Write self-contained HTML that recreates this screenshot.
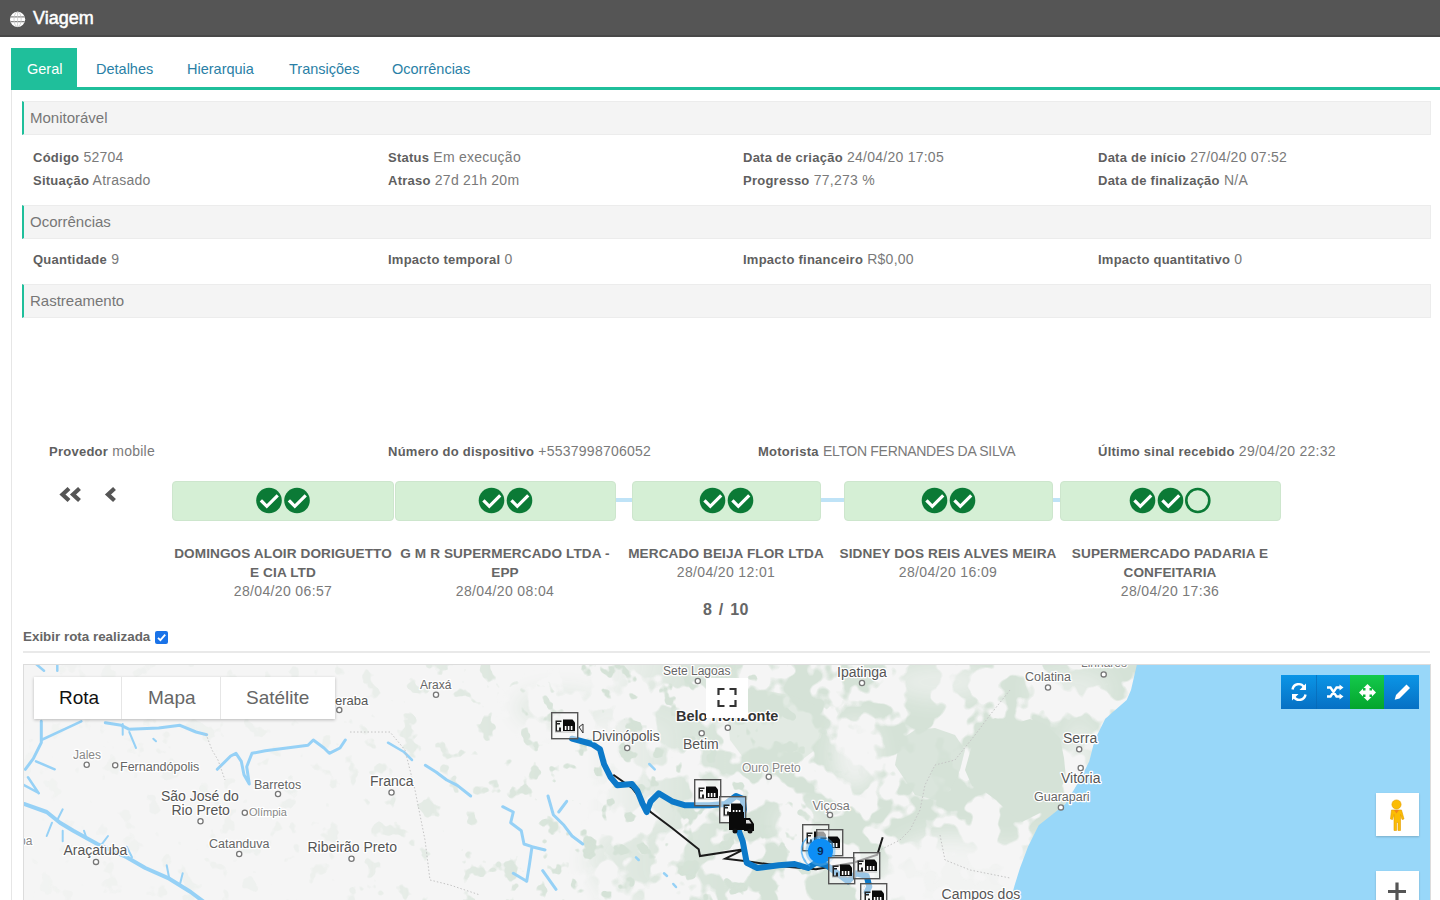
<!DOCTYPE html>
<html><head><meta charset="utf-8">
<style>
*{box-sizing:border-box;margin:0;padding:0}
html,body{width:1440px;height:900px;overflow:hidden;background:#fff;font-family:"Liberation Sans",sans-serif;position:relative}
.a{position:absolute;white-space:nowrap}
.hdr{left:0;top:0;width:1440px;height:37px;background:#555;border-bottom:2px solid #484848}
.ttl{left:33px;top:7px;font-size:18px;color:#fff;line-height:22px;-webkit-text-stroke:0.5px #fff}
.tab{top:48px;height:40px;line-height:42px;font-size:14.5px;color:#2a7fa6}
.tabline{left:11px;top:87px;width:1429px;height:2.5px;background:#1fbf9b}
.vline{left:11px;top:90px;width:1px;height:810px;background:#e6e6e6}
.sec{left:22px;width:1409px;height:34px;background:#f4f4f4;border:1px solid #ececec;border-left:2px solid #1fbf9b;font-size:15px;color:#777;line-height:32px;padding-left:6px}
.f{font-size:14px;color:#7a7a7a;line-height:16px;letter-spacing:0.25px}
.f b{color:#5f5f5f;font-size:13px}
.box{top:481px;height:40px;background:#d5efd5;border-radius:4px;border:1px solid #cde6cd}
.name{font-size:13.6px;font-weight:bold;color:#666;text-align:center;line-height:19px;white-space:normal;letter-spacing:0.1px}
.dt{font-size:14px;color:#7a7a7a;text-align:center;line-height:19px;letter-spacing:0.35px}
</style></head><body>
<div class="a hdr"></div>
<svg class="a" style="left:9px;top:11px" width="17" height="17" viewBox="0 0 17 17"><circle cx="8.6" cy="8.3" r="7.6" fill="#fff"/><g stroke="#888" stroke-width="1.3" fill="none"><path d="M1.5 5.9h14.2M1.5 10.7h14.2"/></g><g stroke="#c8c8c8" stroke-width="0.8" fill="none"><path d="M8.6 1v14.6"/><ellipse cx="8.6" cy="8.3" rx="3.6" ry="7.4"/></g></svg>
<div class="a ttl">Viagem</div>

<div class="a" style="left:11px;top:48px;width:66px;height:40px;background:#1fbf9b"></div>
<div class="a tab" style="left:27px;color:#fff">Geral</div>
<div class="a tab" style="left:96px">Detalhes</div>
<div class="a tab" style="left:187px">Hierarquia</div>
<div class="a tab" style="left:289px">Transições</div>
<div class="a tab" style="left:392px">Ocorrências</div>
<div class="a tabline"></div>
<div class="a vline"></div>

<div class="a sec" style="top:101px">Monitorável</div>
<div class="a f" style="left:33px;top:149px"><b>Código</b> 52704</div>
<div class="a f" style="left:33px;top:172px"><b>Situação</b> Atrasado</div>
<div class="a f" style="left:388px;top:149px"><b>Status</b> Em execução</div>
<div class="a f" style="left:388px;top:172px"><b>Atraso</b> 27d 21h 20m</div>
<div class="a f" style="left:743px;top:149px"><b>Data de criação</b> 24/04/20 17:05</div>
<div class="a f" style="left:743px;top:172px"><b>Progresso</b> 77,273 %</div>
<div class="a f" style="left:1098px;top:149px"><b>Data de início</b> 27/04/20 07:52</div>
<div class="a f" style="left:1098px;top:172px"><b>Data de finalização</b> N/A</div>

<div class="a sec" style="top:205px">Ocorrências</div>
<div class="a f" style="left:33px;top:251px"><b>Quantidade</b> 9</div>
<div class="a f" style="left:388px;top:251px"><b>Impacto temporal</b> 0</div>
<div class="a f" style="left:743px;top:251px"><b>Impacto financeiro</b> R$0,00</div>
<div class="a f" style="left:1098px;top:251px"><b>Impacto quantitativo</b> 0</div>

<div class="a sec" style="top:284px">Rastreamento</div>

<div class="a f" style="left:49px;top:443px"><b>Provedor</b> mobile</div>
<div class="a f" style="left:388px;top:443px"><b>Número do dispositivo</b> +5537998706052</div>
<div class="a f" style="left:758px;top:443px"><b>Motorista</b> <span style="letter-spacing:-0.3px">ELTON FERNANDES DA SILVA</span></div>
<div class="a f" style="left:1098px;top:443px"><b>Último sinal recebido</b> 29/04/20 22:32</div>


<svg class="a" style="left:58px;top:484px" width="62" height="22" viewBox="58 484 62 22">
<g fill="none" stroke="#555" stroke-width="4.2" stroke-linecap="butt" stroke-linejoin="miter">
<path d="M69 488.5L62.5 494.5L69 500.5M79.5 488.5L73 494.5L79.5 500.5"/>
<path d="M114.5 488.5L108 494.5L114.5 500.5"/>
</g></svg>
<div class="a" style="left:616px;top:498px;width:17px;height:4px;background:#bfe3f7"></div>
<div class="a" style="left:820px;top:498px;width:25px;height:4px;background:#bfe3f7"></div>
<div class="a" style="left:1052px;top:498px;width:9px;height:4px;background:#bfe3f7"></div>
<div class="a box" style="left:172px;width:222px"></div>
<div class="a box" style="left:395px;width:221px"></div>
<div class="a box" style="left:632px;width:189px"></div>
<div class="a box" style="left:844px;width:209px"></div>
<div class="a box" style="left:1060px;width:221px"></div>
<svg class="a" style="left:0;top:470px" width="1440" height="60" viewBox="0 470 1440 60">
<defs>
<g id="ck"><circle r="12.8" fill="#0b7a36"/><path d="M-7 1L-2.2 5.8L7.6 -4" fill="none" stroke="#fff" stroke-width="3.2" stroke-linecap="square"/></g>
</defs>
<use href="#ck" x="269" y="500.5"/><use href="#ck" x="297" y="500.5"/>
<use href="#ck" x="491.5" y="500.5"/><use href="#ck" x="519.5" y="500.5"/>
<use href="#ck" x="712.5" y="500.5"/><use href="#ck" x="740.5" y="500.5"/>
<use href="#ck" x="934.5" y="500.5"/><use href="#ck" x="962.5" y="500.5"/>
<use href="#ck" x="1142.5" y="500.5"/><use href="#ck" x="1170.5" y="500.5"/>
<circle cx="1197.8" cy="500.5" r="11.5" fill="none" stroke="#0b7a36" stroke-width="2.6"/>
</svg>
<div class="a name" style="left:163px;top:544px;width:240px">DOMINGOS ALOIR DORIGUETTO<br>E CIA LTD</div>
<div class="a dt" style="left:163px;top:582px;width:240px">28/04/20 06:57</div>
<div class="a name" style="left:385px;top:544px;width:240px">G M R SUPERMERCADO LTDA -<br>EPP</div>
<div class="a dt" style="left:385px;top:582px;width:240px">28/04/20 08:04</div>
<div class="a name" style="left:606px;top:544px;width:240px">MERCADO BEIJA FLOR LTDA</div>
<div class="a dt" style="left:606px;top:563px;width:240px">28/04/20 12:01</div>
<div class="a name" style="left:828px;top:544px;width:240px">SIDNEY DOS REIS ALVES MEIRA</div>
<div class="a dt" style="left:828px;top:563px;width:240px">28/04/20 16:09</div>
<div class="a name" style="left:1050px;top:544px;width:240px">SUPERMERCADO PADARIA E<br>CONFEITARIA</div>
<div class="a dt" style="left:1050px;top:582px;width:240px">28/04/20 17:36</div>
<div class="a" style="left:606px;top:600px;width:240px;text-align:center;font-size:16px;font-weight:bold;color:#666;line-height:20px;word-spacing:1.5px;letter-spacing:0.5px">8 / 10</div>
<div class="a" style="left:23px;top:629px;font-size:13.4px;font-weight:bold;color:#666;line-height:16px">Exibir rota realizada</div>
<div class="a" style="left:155px;top:631px;width:13px;height:13px;background:#1a73e8;border-radius:2px"></div>
<svg class="a" style="left:155px;top:631px" width="13" height="13" viewBox="0 0 13 13"><path d="M3 6.8L5.4 9.2L10.2 3.6" fill="none" stroke="#fff" stroke-width="1.8"/></svg>
<div class="a" style="left:23px;top:651px;width:1407px;height:2px;background:#e9e9e9"></div>


<div class="a" style="left:23px;top:664px;width:1408px;height:236px;border:1px solid #dcdcdc;border-bottom:none;overflow:hidden;background:#f5f5f5">
<svg width="1406" height="236" viewBox="24 665 1406 236" style="display:block">
<defs>
<filter id="turb" x="0" y="0" width="100%" height="100%" color-interpolation-filters="sRGB">
<feTurbulence type="fractalNoise" baseFrequency="0.032" numOctaves="3" seed="7" result="n"/>
<feColorMatrix in="n" type="matrix" values="0 0 0 0 0.835  0 0 0 0 0.886  0 0 0 0 0.843  0 0 0 -14 7.4"/>
</filter>
<filter id="turb2" x="0" y="0" width="100%" height="100%" color-interpolation-filters="sRGB">
<feTurbulence type="fractalNoise" baseFrequency="0.05" numOctaves="3" seed="21" result="n"/>
<feColorMatrix in="n" type="matrix" values="0 0 0 0 0.835  0 0 0 0 0.886  0 0 0 0 0.843  0 0 0 -16 5.9"/>
</filter>
<linearGradient id="dens2" gradientUnits="userSpaceOnUse" x1="24" x2="1430" y1="0" y2="0">
<stop offset="0" stop-color="#fff" stop-opacity="0.1"/>
<stop offset="0.22" stop-color="#fff" stop-opacity="0.25"/>
<stop offset="0.40" stop-color="#fff" stop-opacity="1"/>
<stop offset="0.55" stop-color="#fff" stop-opacity="1"/>
<stop offset="0.6" stop-color="#fff" stop-opacity="0"/>
</linearGradient>
<mask id="m2" maskUnits="userSpaceOnUse" x="24" y="665" width="1406" height="236"><rect x="24" y="665" width="1406" height="236" fill="url(#dens2)"/></mask>
<linearGradient id="dens" gradientUnits="userSpaceOnUse" x1="24" x2="1430" y1="0" y2="0">
<stop offset="0" stop-color="#fff" stop-opacity="0"/>
<stop offset="0.40" stop-color="#fff" stop-opacity="0"/>
<stop offset="0.47" stop-color="#fff" stop-opacity="0.8"/>
<stop offset="0.52" stop-color="#fff" stop-opacity="1"/>
</linearGradient>
<filter id="mblur" x="-50%" y="-50%" width="200%" height="200%"><feGaussianBlur stdDeviation="10"/></filter>
<mask id="m1" maskUnits="userSpaceOnUse" x="24" y="665" width="1406" height="236">
<rect x="24" y="665" width="1406" height="236" fill="url(#dens)"/>
<g filter="url(#mblur)" fill="#000">
<ellipse cx="855" cy="755" rx="22" ry="35" opacity="0.8"/>
<ellipse cx="940" cy="682" rx="50" ry="18" opacity="0.6"/>
<ellipse cx="950" cy="880" rx="70" ry="45" opacity="0.9"/>
<ellipse cx="1040" cy="870" rx="40" ry="30" opacity="0.8"/>
<ellipse cx="800" cy="822" rx="25" ry="12" opacity="0.7"/>
<ellipse cx="1080" cy="755" rx="18" ry="30" opacity="0.6"/>
<ellipse cx="1070" cy="690" rx="40" ry="20" opacity="0.5"/>
</g>
<g filter="url(#mblur)" fill="#fff">
<ellipse cx="560" cy="708" rx="45" ry="18" opacity="0.6"/>
<ellipse cx="650" cy="705" rx="30" ry="18" opacity="0.5"/>
<ellipse cx="640" cy="860" rx="55" ry="35" opacity="0.5"/>
</g>
</mask>
</defs>
<rect x="24" y="665" width="1406" height="236" fill="#f5f5f5"/>
<g mask="url(#m2)"><rect x="24" y="665" width="1406" height="236" filter="url(#turb2)"/></g><g mask="url(#m1)"><rect x="24" y="665" width="1406" height="236" filter="url(#turb)"/></g>
<g fill="#d5e2d7">
<path d="M980 728 L995 718 L1012 724 L1030 719 L1048 726 L1060 738 L1064 758 L1066 778 L1057 795 L1050 808 L1036 815 L1022 822 L1008 812 L996 800 L985 792 L972 786 L965 770 L970 752 L974 740Z"/>
<path d="M900 740 L915 730 L935 728 L955 735 L965 750 L960 770 L950 790 L935 800 L915 795 L905 780 L895 765Z" opacity="0.85"/>
<path d="M735 700 L760 690 L790 695 L815 705 L825 725 L815 750 L795 765 L770 770 L745 760 L730 740 L728 720Z" opacity="0.6"/>
</g>
<path d="M1137 664 L1131 690 L1126.7 700 L1105.3 718.7 L1094.7 740 L1089.3 761.3 L1081.3 777.3 L1073.3 790.7 L1065.3 804 L1052 814.7 L1038.7 825.3 L1028 846.7 L1020 868 L1014.7 885 L1010 902 L1432 902 L1432 664 Z" fill="#98d7f9"/>
<g fill="none" stroke="#96d1f6" stroke-linecap="round" stroke-linejoin="round">
<path d="M24 804 L46.7 812 L60 822.7 L73.3 830.7 L97.3 844 L126.7 857.3 L145.3 868 L169.3 878.7 L190.7 892 L204 902" stroke-width="4"/>
<path d="M57.3 820 L62.7 809.3 M52 822.7 L46.7 836 M62.7 830.7 L62.7 841.3 M86.7 838.7 L84 830.7 M100 846.7 L108 836 M132 857.3 L126.7 846.7 M169.3 878.7 L166.7 865.3 M180 884 L182.7 873.3" stroke-width="2"/>
<path d="M57.3 664 L57.3 670.7 M36 664 L44 670.7" stroke-width="2.5"/>
<path d="M41.3 721.3 L41.3 742.7 L33.3 758.7 L25.3 769.3" stroke-width="3"/>
<path d="M41.3 740 L81.3 721.3 M36 761.3 L54.7 769.3 M28 777.3 L38.7 793.3 M24 785 L38.7 793" stroke-width="2.5"/>
<path d="M105.3 722.7 L121.3 725.3 L129.3 729.3 L158.7 728 L180 725.3 L196 732 L206.7 734.7" stroke-width="3"/>
<path d="M122.7 724 L122.7 734.7 M129.3 732 L136 748 M153.3 738.7 L156 741.3" stroke-width="2"/>
<path d="M217.3 769.3 L230.7 756 L236 753.3 L241.3 761.3 L244 774.7 L249.3 784 L246.7 766.7 L252 753.3 L265.3 750.7 L286.7 748 L308 745.3 L313.3 740 L324 748 L329.3 753.3 L340 748 L345.3 740" stroke-width="3"/>
<path d="M388 742.7 L404 752 L412 760" stroke-width="2.5"/>
<path d="M425.3 765.3 L436 772 L446.7 780 L457.3 785.3 L470.7 796" stroke-width="3"/>
<path d="M502.7 806.7 L513.3 812 L510.7 822.7 L521.3 830.7 L524 844 L532 846.7 L529.3 865.3 L526.7 881.3 M513.3 873.3 L526.7 881.3 M542.7 870.7 L556 889.3 M532 846.7 L545 850" stroke-width="3"/>
<path d="M548 796 L553.3 814.7 L564 825.3 L572 836 L582.7 844 M566.7 801.3 L558.7 812" stroke-width="3"/>
<path d="M649.3 764 L654.7 769.3 M636 857.3 L638.7 860 M664 873.3 L667 876 M673.3 884 L676 887" stroke-width="2.5"/>
</g>
<g fill="none" stroke="#c4c4c4" stroke-width="1" stroke-dasharray="1.5 2">
<path d="M206 734 L212 750 L218 760 L225 780"/>
<path d="M350 732 L390 732 L405 750 L415 790 L425 840 L430 880 L450 885 L480 895"/>
<path d="M1010 690 L990 715 L975 735 L955 760 L935 765 L925 785 L920 810 L910 830 L900 840 L880 850 L870 870 L860 900"/>
<path d="M940 835 L945 860 L970 870 L1010 878"/>
</g>
<path d="M613.3 774.7 L632 788 L650.7 812 L672 828 L698.7 849.3 L700 856 L744 849.3 L725.3 858.7 L746.7 861.3 L786.7 866.7 L816 869.3 L853.3 862.7 L877.3 854.7 L882.7 837.3" fill="none" stroke="#1b1b1b" stroke-width="2"/>
<path d="M572 738.7 L592 744 L600 749.3 L604 764 L610.7 777.3 L617.3 785.3 L632 784 L637.3 790.7 L642.7 804 L646.7 812 L650.7 801.3 L658.7 793.3 L672 801.3 L685.3 805.3 L709.3 805.3 L725.3 804 L736 796 L742.7 798.7 L744 809.3 L738.7 830.7 L742.7 841.3 L746.7 862.7 L757.3 868 L778.7 865.3 L794.7 864 L808 868 L816 862.7 L826.7 865.3 L837.3 873.3 L848 881.3 L856 873.3 L866.7 876 L869.3 886.7 L866.7 892" fill="none" stroke="#0c79c9" stroke-width="6" stroke-linejoin="round" stroke-linecap="round"/>
<defs><g id="mk"><rect x="0.7" y="0.7" width="26" height="26" fill="rgba(250,250,250,0.6)" stroke="#555" stroke-width="1.4"/><path d="M4.5 8.5h6v1.5h-4.5v1h3v1.5h-3v6h2v-3h2v4.5h-5.5z" fill="#222"/><path d="M12 7.5h9.5l2.5 3v8.5h-12z" fill="#0a0a0a"/><path d="M13.8 14h1.6v4h-1.6zM16.8 14h1.6v4h-1.6zM19.8 14h1.6v4h-1.6z" fill="#fff"/><path d="M4 20h20" stroke="#bbb" stroke-width="1"/></g></defs>
<use href="#mk" x="551" y="712"/>
<path d="M579 727 l4 -3 v9 z" fill="none" stroke="#333" stroke-width="1"/>
<use href="#mk" x="694" y="779"/>
<use href="#mk" x="719" y="796"/>
<path d="M729 812 h15 v18 h-15z M744 818 h6 l4 6 v7 h-10z" fill="#0a0a0a"/><path d="M746 820h3l2.5 3.5h-5.5z" fill="#ddd"/>
<circle cx="735" cy="831" r="2.5" fill="#111"/><circle cx="750" cy="831" r="2.5" fill="#111"/>
<use href="#mk" x="802" y="824"/>
<use href="#mk" x="816" y="829"/>
<path d="M807 838 A18 18 0 0 0 810 866 M803 842 A20 20 0 0 0 806 862" fill="none" stroke="#3aa7f5" stroke-width="1.5" opacity="0.7"/>
<circle cx="820.5" cy="851" r="15" fill="#58b4f7" opacity="0.45"/>
<circle cx="820.5" cy="851" r="12.5" fill="#0d8ef5"/>
<text x="820.5" y="855" font-size="11.5" font-weight="bold" text-anchor="middle" fill="#0a2a55" font-family="Liberation Sans">9</text>
<use href="#mk" x="828" y="857"/>
<use href="#mk" x="853" y="852"/>
<use href="#mk" x="860" y="883"/>

<g font-family="Liberation Sans" stroke="#fff" stroke-width="2.5" paint-order="stroke" stroke-linejoin="round">
<text x="335" y="705" font-size="13" fill="#555" font-weight="normal">eraba</text>
<text x="420" y="689" font-size="12" fill="#666" font-weight="normal">Araxá</text>
<text x="73" y="759" font-size="12" fill="#888" font-weight="normal">Jales</text>
<text x="120" y="770.5" font-size="12.5" fill="#666" font-weight="normal">Fernandópolis</text>
<text x="161" y="800.8" font-size="14" fill="#555" font-weight="normal">São José do</text>
<text x="171.5" y="815.2" font-size="14" fill="#555" font-weight="normal">Rio Preto</text>
<text x="254" y="788.5" font-size="12.5" fill="#666" font-weight="normal">Barretos</text>
<text x="249" y="816" font-size="11" fill="#888" font-weight="normal">Olímpia</text>
<text x="209" y="848" font-size="12.5" fill="#666" font-weight="normal">Catanduva</text>
<text x="63.5" y="854.7" font-size="14" fill="#555" font-weight="normal">Araçatuba</text>
<text x="19" y="845" font-size="12" fill="#888" font-weight="normal">ba</text>
<text x="307.5" y="852" font-size="14" fill="#555" font-weight="normal">Ribeirão Preto</text>
<text x="370" y="786" font-size="14" fill="#555" font-weight="normal">Franca</text>
<text x="592" y="740.5" font-size="14" fill="#555" font-weight="normal">Divinópolis</text>
<text x="663" y="675" font-size="12" fill="#666" font-weight="normal">Sete Lagoas</text>
<text x="676" y="720.6" font-size="14.5" fill="#333" font-weight="bold">Belo Horizonte</text>
<text x="683" y="749" font-size="14" fill="#555" font-weight="normal">Betim</text>
<text x="837" y="676.8" font-size="14" fill="#555" font-weight="normal">Ipatinga</text>
<text x="742" y="771.6" font-size="12" fill="#888" font-weight="normal">Ouro Preto</text>
<text x="812.5" y="809.8" font-size="12.5" fill="#777" font-weight="normal">Viçosa</text>
<text x="941.6" y="898.5" font-size="14" fill="#555" font-weight="normal">Campos dos</text>
<text x="1025" y="681.4" font-size="12.5" fill="#666" font-weight="normal">Colatina</text>
<text x="1081" y="667" font-size="12" fill="#777" font-weight="normal">Linhares</text>
<text x="1063" y="743.2" font-size="14" fill="#555" font-weight="normal">Serra</text>
<text x="1061" y="783" font-size="14" fill="#555" font-weight="normal">Vitória</text>
<text x="1034" y="801.3" font-size="12.5" fill="#666" font-weight="normal">Guarapari</text>
</g><g fill="#fff" stroke="#777" stroke-width="1.3">
<circle cx="339.3" cy="710" r="2.6"/>
<circle cx="436" cy="694.7" r="2.6"/>
<circle cx="86.7" cy="764.8" r="2.6"/>
<circle cx="115.2" cy="765.3" r="2.6"/>
<circle cx="200.5" cy="821.3" r="2.6"/>
<circle cx="278" cy="794" r="2.6"/>
<circle cx="244.8" cy="812.8" r="2.6"/>
<circle cx="239.2" cy="854" r="2.6"/>
<circle cx="96" cy="861.9" r="2.6"/>
<circle cx="351.5" cy="858.7" r="2.6"/>
<circle cx="391.5" cy="792.5" r="2.6"/>
<circle cx="627.2" cy="748" r="2.6"/>
<circle cx="697.8" cy="681" r="2.6"/>
<circle cx="701.7" cy="733.3" r="2.6"/>
<circle cx="727.8" cy="727.8" r="2.6"/>
<circle cx="862" cy="683" r="2.6"/>
<circle cx="768.8" cy="776.8" r="2.6"/>
<circle cx="830" cy="815" r="2.6"/>
<circle cx="1048" cy="687.5" r="2.6"/>
<circle cx="1103.7" cy="674.4" r="2.6"/>
<circle cx="1079.2" cy="749.3" r="2.6"/>
<circle cx="1080.7" cy="768" r="2.6"/>
<circle cx="1060.9" cy="807.4" r="2.6"/>
</g>
</svg>
</div>

<div class="a" style="left:34px;top:677px;width:301px;height:42px;background:#fff;box-shadow:0 1px 3px rgba(0,0,0,0.25);font-size:19px;line-height:42px;color:#666">
<div class="a" style="left:87px;top:0;width:1px;height:42px;background:#e6e6e6"></div>
<div class="a" style="left:186px;top:0;width:1px;height:42px;background:#e6e6e6"></div>
<div class="a" style="left:25px;top:0;color:#111">Rota</div>
<div class="a" style="left:114px;top:0">Mapa</div>
<div class="a" style="left:212px;top:0">Satélite</div>
</div>
<div class="a" style="left:706px;top:678px;width:42px;height:40px;background:#fff"></div>
<svg class="a" style="left:706px;top:678px" width="42" height="40" viewBox="706 678 42 40"><path d="M718.5 695v-6h6M729.5 689h6v6M735.5 700v6h-6M724.5 706h-6v-6" fill="none" stroke="#333" stroke-width="2.2"/></svg>
<div class="a" style="left:1281px;top:675px;width:138px;height:34px;background:linear-gradient(#0b95e6,#0670c4)"></div>
<div class="a" style="left:1350px;top:675px;width:34px;height:34px;background:linear-gradient(#14c94c,#03a52c)"></div>
<div class="a" style="left:1316px;top:675px;width:1px;height:34px;background:#0966b0;opacity:.6"></div>
<svg class="a" style="left:1281px;top:675px" width="138" height="34" viewBox="0 0 138 34">
<g fill="none" stroke="#fff" stroke-width="2.4">
<path d="M11.5 14.5a6.3 6.3 0 0 1 11.5-2.5M24.5 19.5a6.3 6.3 0 0 1-11.5 2.5"/>
</g>
<path d="M25 8.5v6.5h-6.5zM11 25.5v-6.5h6.5z" fill="#fff"/>
<g fill="none" stroke="#fff" stroke-width="2.3">
<path d="M46 12.5h3.5l6 9h4M46 21.5h3.5l6-9h4"/>
</g>
<path d="M58.5 9.5l4 3-4 3zM58.5 18.5l4 3-4 3z" fill="#fff"/>
<path d="M86.5 9l4 4h-2v2.5h2.5v-2l4 4-4 4v-2h-2.5v2.5h2l-4 4-4-4h2v-2.5h-2.5v2l-4-4 4-4v2h2.5v-2.5h-2z" fill="#fff"/>
<path d="M125.5 9.5l3.5 3.5-10.5 10.5-4.8 1.3 1.3-4.8z" fill="#fff"/>
</svg>
<div class="a" style="left:1376px;top:793px;width:43px;height:43px;background:#fff;box-shadow:0 1px 2px rgba(0,0,0,.2)"></div>
<svg class="a" style="left:1376px;top:793px" width="43" height="43" viewBox="0 0 43 43">
<circle cx="20.5" cy="11.5" r="4.6" fill="#fbbc04" stroke="#e29c00" stroke-width=".6"/>
<path d="M15.5 17h10l2.5 9-2 .5-1.5-5v16h-2.5v-8h-1.5v8h-2.5v-16l-1.5 5-2-.5z" fill="#fbbc04" stroke="#e29c00" stroke-width=".6"/>
<path d="M18 17l2.5 3.5 2.5-3.5z" fill="#f08a1c"/>
</svg>
<div class="a" style="left:1376px;top:871px;width:43px;height:40px;background:#fff;box-shadow:0 1px 2px rgba(0,0,0,.2)"></div>
<svg class="a" style="left:1376px;top:871px" width="43" height="29" viewBox="0 0 43 29"><path d="M12 20.5h18M21 11.5v18" stroke="#555" stroke-width="3.2"/></svg>


</body></html>
